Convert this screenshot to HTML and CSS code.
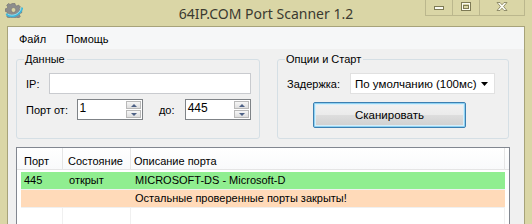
FILE: index.html
```html
<!DOCTYPE html>
<html lang="ru">
<head>
<meta charset="utf-8">
<title>64IP.COM Port Scanner 1.2</title>
<link rel="stylesheet" href="styles.css">
</head>
<body>
<div class="window">
  <header class="titlebar">
    <div class="tb-left">
      <svg class="app-icon" width="18" height="16" viewBox="0 0 18 16">
        <g fill="#8c8c8c" stroke="#6e6e6e" stroke-width="0.6">
          <path d="M7 1.5h3l.4 1.8 1.5.7 1.6-1 1.8 1.8-1 1.6.6 1.5 1.8.4v2.6l-1.8.4-.6 1.5 1 1.6-1.8 1.8-1.6-1-1.5.6-.4 1.8H7l-.4-1.8-1.5-.6-1.6 1-1.8-1.8 1-1.6L2.1 9.8.3 9.4V6.8l1.8-.4.6-1.5-1-1.6 1.8-1.8 1.6 1 1.5-.7z"/>
        </g>
        <circle cx="8.5" cy="8" r="2.4" fill="#d8d4a4" stroke="#6e6e6e" stroke-width="0.6"/>
        <path d="M2 12.5 C6 15.5 14 14.5 17 6.5" fill="none" stroke="#3fb6d8" stroke-width="2.2" stroke-linecap="round"/>
        <path d="M3 12.2 C7 14.5 13.5 13 16 7" fill="none" stroke="#a8e6f5" stroke-width="0.8" stroke-linecap="round"/>
      </svg>
    </div>
    <div class="title">64IP.COM Port Scanner 1.2</div>
    <div class="tb-right">
      <div class="caption">
        <span class="cbtn cbtn-min">
          <svg width="10" height="4" viewBox="0 0 10 4"><rect x="0.5" y="0.5" width="9" height="3" fill="#fbfbf2" stroke="#7d7a55"/></svg>
        </span>
        <span class="cbtn cbtn-max">
          <svg width="10" height="9" viewBox="0 0 10 9"><rect x="0.5" y="0.5" width="9" height="8" fill="none" stroke="#7d7a55"/><rect x="1.5" y="1.5" width="7" height="6" fill="none" stroke="#fbfbf2"/><rect x="2.5" y="3.5" width="5" height="3" fill="none" stroke="#7d7a55"/></svg>
        </span>
        <span class="cbtn cbtn-close">
          <svg width="12" height="9" viewBox="0 0 12 9"><path d="M1 0.5h3l2 2.3 2-2.3h3L7.6 4.5 11 8.5H8L6 6.2 4 8.5H1l3.4-4z" fill="#fbfbf2" stroke="#7d7a55" stroke-width="0.8"/></svg>
        </span>
      </div>
    </div>
  </header>

  <div class="client">
    <nav class="menubar">
      <span class="menu-item">Файл</span>
      <span class="menu-item">Помощь</span>
    </nav>

    <div class="groups">
      <fieldset class="group group-data">
        <legend class="group-title">Данные</legend>
        <div class="row row-ip">
          <span class="lbl lbl-ip">IP:</span>
          <div class="textbox ip-box"></div>
        </div>
        <div class="row row-port">
          <span class="lbl lbl-from">Порт от:</span>
          <div class="spin">
            <span class="spin-val">1</span>
            <span class="spin-btns">
              <span class="sb sb-up"></span>
              <span class="sb sb-down"></span>
            </span>
          </div>
          <span class="lbl lbl-to">до:</span>
          <div class="spin">
            <span class="spin-val">445</span>
            <span class="spin-btns">
              <span class="sb sb-up"></span>
              <span class="sb sb-down"></span>
            </span>
          </div>
        </div>
      </fieldset>

      <fieldset class="group group-opts">
        <legend class="group-title">Опции и Старт</legend>
        <div class="row row-delay">
          <span class="lbl lbl-delay">Задержка:</span>
          <div class="combo">
            <span class="combo-val">По умолчанию (100мс)</span>
            <svg class="combo-arrow" width="7" height="4" viewBox="0 0 7 4"><path d="M0 0h7L3.5 4z" fill="#000"/></svg>
          </div>
        </div>
        <div class="row row-btn">
          <button class="scan-btn" type="button">Сканировать</button>
        </div>
      </fieldset>
    </div>

    <div class="listview">
      <div class="lv-head">
        <div class="cell c1">Порт</div>
        <div class="cell c2">Состояние</div>
        <div class="cell c3">Описание порта</div>
      </div>
      <div class="lv-row row-open">
        <div class="cell c1">445</div>
        <div class="cell c2">открыт</div>
        <div class="cell c3">MICROSOFT-DS - Microsoft-D</div>
      </div>
      <div class="lv-row row-info">
        <div class="cell c1"></div>
        <div class="cell c2"></div>
        <div class="cell c3">Остальные проверенные порты закрыты!</div>
      </div>
      <div class="lv-row row-empty">
        <div class="cell c1"></div>
        <div class="cell c2"></div>
        <div class="cell c3"></div>
      </div>
    </div>
  </div>
</div>
</body>
</html>
```

FILE: styles.css
```css
* { box-sizing: border-box; }

html, body {
  margin: 0;
  padding: 0;
  width: 532px;
  height: 224px;
  overflow: hidden;
}

body {
  font-family: "Liberation Sans", Arial, sans-serif;
  font-size: 11px;
  color: #000;
  background: #dad6a6;
}

.window {
  width: 532px;
  height: 224px;
  padding: 0 7px;
  background: #dad6a6;
  display: flex;
  flex-direction: column;
  overflow: hidden;
}

/* ---------- title bar ---------- */
.titlebar {
  height: 26px;
  flex: none;
  display: grid;
  grid-template-columns: 1fr auto 1fr;
  margin: 0 -7px;
}

.tb-left {
  display: flex;
  align-items: flex-start;
  padding: 2px 0 0 5px;
}

.title {
  font-family: "Noto Sans", "Open Sans", sans-serif;
  font-size: 14px;
  color: #3a3a30;
  line-height: 26px;
  padding-top: 1px;
  white-space: nowrap;
}

.tb-right {
  display: flex;
  justify-content: flex-end;
  align-items: flex-start;
  padding-right: 7px;
}

.caption {
  display: flex;
  height: 16px;
  border: 1px solid #bbb78d;
  border-top: 0;
}

.cbtn {
  display: flex;
  align-items: center;
  justify-content: center;
  height: 15px;
  width: 27px;
  border-left: 1px solid #bbb78d;
  padding-bottom: 2px;
}
.cbtn:first-child { border-left: 0; width: 26px; }
.cbtn-min { align-items: flex-end; padding-bottom: 5px; }
.cbtn-close { width: 45px; }

/* ---------- client ---------- */
.client {
  flex: 1;
  background: #f0f0f0;
  border: 1px solid #a7a37a;
  border-bottom: 0;
  display: flex;
  flex-direction: column;
  min-height: 0;
}

.menubar {
  height: 22px;
  flex: none;
  display: flex;
  align-items: center;
  padding: 1px 0 0 4px;
  background: #f6f7f8;
}

.menu-item {
  padding: 0 7px;
}
.menu-item + .menu-item { margin-left: 6px; }

.groups {
  display: flex;
  margin: 3px 15px 0 8px;
  gap: 17px;
}

.group {
  margin: 0;
  min-width: 0;
  border: 1px solid #d5dfe5;
  border-radius: 3px;
  padding: 0 8px 10px 9px;
}

.group-data { width: 244px; flex: none; }
.group-opts { flex: 1; }

.group-title {
  padding: 0 2px 0 1px;
  margin-left: -2px;
  line-height: 14px;
  color: #000;
}

.row {
  display: flex;
  align-items: center;
}

.lbl { white-space: nowrap; }

.row-ip { margin-top: 7px; }
.lbl-ip { width: 23px; }

.textbox {
  height: 21px;
  background: #fff;
  border: 1px solid #c9cbcf;
}
.ip-box { width: 202px; }

.row-port { margin-top: 5px; }
.lbl-from { width: 51px; }
.lbl-to { width: 26px; margin-left: 16px; }

.spin {
  width: 67px;
  height: 21px;
  background: #fff;
  border: 1px solid #7f8387;
  display: flex;
  align-items: stretch;
  padding: 1px;
}

.spin-val {
  flex: 1;
  padding-left: 1px;
  line-height: 15px;
  font-size: 12px;
}

.spin-btns {
  width: 15px;
  display: flex;
  flex-direction: column;
  gap: 1px;
}

.sb {
  flex: 1;
  position: relative;
  border: 1px solid #b9b9b9;
  background: linear-gradient(#f6f6f6, #dedede);
}
.sb::after {
  content: "";
  position: absolute;
  left: 4px;
  top: 2px;
  border-left: 3px solid transparent;
  border-right: 3px solid transparent;
}
.sb-up::after { border-bottom: 3px solid #4d6185; }
.sb-down::after { border-top: 3px solid #4d6185; top: 2px; }

/* options group */
.row-delay { margin-top: 7px; }
.lbl-delay { width: 63px; }

.combo {
  width: 145px;
  height: 21px;
  background: #fff;
  border: 1px solid #e1e1e1;
  display: flex;
  align-items: center;
  padding: 0 6px 0 4px;
}
.combo-val { flex: 1; white-space: nowrap; font-size: 11.5px; }

.row-btn { margin-top: 8px; padding-left: 26px; }

.scan-btn {
  width: 153px;
  height: 26px;
  font-family: inherit;
  font-size: 11.5px;
  color: #000;
  border: 1px solid #3c7fb1;
  border-radius: 2px;
  background: linear-gradient(#f2f2f2 0%, #ebebeb 48%, #dddddd 52%, #cfcfcf 100%);
  box-shadow: inset 0 0 0 1px #8fd2f2, inset 0 0 0 2px #d7eefa;
  padding: 0;
}

/* ---------- list view ---------- */
.listview {
  margin: 8px 14px 0 8px;
  flex: 1;
  background: #fff;
  border: 1px solid #828790;
  border-bottom: 0;
  padding: 0 4px 0 4px;
  display: flex;
  flex-direction: column;
}

.lv-head {
  display: flex;
  height: 22px;
  align-items: stretch;
  border-bottom: 1px solid #e5e5e5;
  margin: 0 -4px 2px -4px;
  padding: 0 0 0 4px;
  background: linear-gradient(#ffffff, #f9fafb);
}

.lv-head .cell {
  display: flex;
  align-items: center;
  padding-top: 4px;
  border-right: 1px solid #e5e5e5;
}

.cell { white-space: nowrap; overflow: hidden; }
.c1 { width: 42px; padding-left: 3px; }
.c2 { width: 68px; padding-left: 5px; }
.c3 { width: 374px; padding-left: 3px; }

.lv-row {
  display: flex;
  height: 18px;
  border-bottom: 1px solid #f0f0f0;
}
.lv-row .cell {
  line-height: 17px;
  border-right: 1px solid #f0f0f0;
  font-size: 11px;
}
.lv-row .c2 { padding-left: 6px; }
.lv-row .c3 { padding-left: 4px; }

.row-open { background: #90ee90; }
.row-info { background: #ffdab9; }
.row-open .cell, .row-info .cell { border-right-color: transparent; }
```
